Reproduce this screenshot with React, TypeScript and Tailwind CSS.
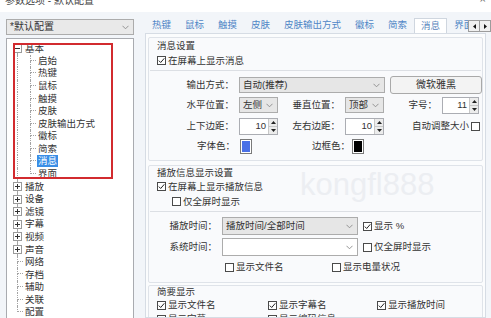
import React from 'react';

const FONT = "font-['Liberation_Sans','Noto_Sans_CJK_SC',sans-serif]";

type Node = { t: string; kind: 'open' | 'plus' | 'leaf' | 'child'; last?: boolean; first?: boolean; sel?: boolean };

const tree: Node[] = [
  { t: '基本', kind: 'open', first: true },
  { t: '启始', kind: 'child' },
  { t: '热键', kind: 'child' },
  { t: '鼠标', kind: 'child' },
  { t: '触摸', kind: 'child' },
  { t: '皮肤', kind: 'child' },
  { t: '皮肤输出方式', kind: 'child' },
  { t: '徽标', kind: 'child' },
  { t: '简索', kind: 'child' },
  { t: '消息', kind: 'child', sel: true },
  { t: '界面', kind: 'child', last: true },
  { t: '播放', kind: 'plus' },
  { t: '设备', kind: 'plus' },
  { t: '滤镜', kind: 'plus' },
  { t: '字幕', kind: 'plus' },
  { t: '视频', kind: 'plus' },
  { t: '声音', kind: 'plus' },
  { t: '网络', kind: 'leaf' },
  { t: '存档', kind: 'leaf' },
  { t: '辅助', kind: 'leaf' },
  { t: '关联', kind: 'leaf' },
  { t: '配置', kind: 'leaf', last: true },
];

const line = 'border-l border-dotted border-[#a3a3a3]';

function TreeRow({ n }: { n: Node }) {
  if (n.kind === 'open' || n.kind === 'plus') {
    return (
      <div className="flex h-[12.57px] items-stretch">
        <div className="w-[6px]" />
        <div className="flex w-[9px] flex-col items-center">
          <div className={`w-0 flex-1 ${n.first ? '' : line}`} />
          <div className="flex h-[9px] w-[9px] items-center justify-center border border-[#9a9a9a] bg-white">
            <svg width="7" height="7" viewBox="0 0 7 7">
              <path d="M1 3.5H6" stroke="#333" strokeWidth="1" />
              {n.kind === 'plus' && <path d="M3.5 1V6" stroke="#333" strokeWidth="1" />}
            </svg>
          </div>
          <div className={`w-0 flex-1 ${line}`} />
        </div>
        <span className="ml-[3px] self-center leading-none">{n.t}</span>
      </div>
    );
  }
  if (n.kind === 'leaf') {
    return (
      <div className="flex h-[12.57px] items-stretch">
        <div className="w-[10px]" />
        <div className="flex w-[6px] flex-col">
          <div className={`h-1/2 border-b border-dotted border-[#a3a3a3] ${line}`} />
          <div className={`h-1/2 ${n.last ? '' : line}`} />
        </div>
        <span className="ml-[2px] self-center leading-none">{n.t}</span>
      </div>
    );
  }
  return (
    <div className="flex h-[12.57px] items-stretch">
      <div className="w-[10px]" />
      <div className={`w-[13px] ${line}`} />
      <div className="flex w-[6px] flex-col">
        <div className={`h-1/2 border-b border-dotted border-[#a3a3a3] ${line}`} />
        <div className={`h-1/2 ${n.last ? '' : line}`} />
      </div>
      <span
        className={`ml-[1px] self-center px-[1px] leading-[12px] ${n.sel ? 'bg-[#3a8ee6] text-white' : ''}`}
      >
        {n.t}
      </span>
    </div>
  );
}

function Chevron() {
  return (
    <svg width="7" height="5" viewBox="0 0 7 5" className="shrink-0">
      <path d="M0.5 0.8L3.5 3.8L6.5 0.8" stroke="#8a8a8a" fill="none" strokeWidth="0.9" />
    </svg>
  );
}

function Select({ text, w, white, h = 'h-[16px]' }: { text: string; w: string; white?: boolean; h?: string }) {
  return (
    <div
      className={`flex ${w} ${h} shrink-0 items-center border border-[#acacac] pl-[3px] pr-[4px] ${
        white ? 'bg-white' : 'bg-[#e6e6e6]'
      }`}
    >
      <span className="flex-1 truncate leading-none">{text}</span>
      <Chevron />
    </div>
  );
}

function Spin({ v, w }: { v: string; w: string }) {
  return (
    <div className={`flex ${w} h-[17px] shrink-0 border border-[#abadb3] bg-white`}>
      <span className="flex-1 self-center pr-[2px] text-right leading-none">{v}</span>
      <div className="flex w-[9px] flex-col border-l border-[#c8c8c8] bg-[#ececec]">
        <div className="flex flex-1 items-center justify-center border-b border-[#c8c8c8]">
          <svg width="5" height="3" viewBox="0 0 5 3">
            <path d="M0 3L2.5 0L5 3Z" fill="#222" />
          </svg>
        </div>
        <div className="flex flex-1 items-center justify-center">
          <svg width="5" height="3" viewBox="0 0 5 3">
            <path d="M0 0L2.5 3L5 0Z" fill="#222" />
          </svg>
        </div>
      </div>
    </div>
  );
}

function Check({ on }: { on?: boolean }) {
  return (
    <span className="flex h-[9px] w-[9px] shrink-0 items-center justify-center border border-[#4a4a4a] bg-white">
      {on && (
        <svg width="7" height="7" viewBox="0 0 7 7">
          <path d="M0.8 3.6L2.7 5.5L6.3 1.3" stroke="#222" fill="none" strokeWidth="1" />
        </svg>
      )}
    </span>
  );
}

function CheckLabel({ on, text }: { on?: boolean; text: string }) {
  return (
    <div className="flex items-center gap-[2px]">
      <Check on={on} />
      <span className="leading-none">{text}</span>
    </div>
  );
}

function Swatch({ color }: { color: string }) {
  return (
    <div className="h-[15px] w-[12px] shrink-0 border border-[#7a7a7a] bg-white p-[1px]">
      <div className={`h-full w-full ${color}`} />
    </div>
  );
}

const tabs = ['热键', '鼠标', '触摸', '皮肤', '皮肤输出方式', '徽标', '简索', '消息', '界面'];

export default function App() {
  return (
    <div className={`relative h-[318px] w-[491px] overflow-hidden bg-white text-[9.5px] text-[#333] ${FONT}`}>
      {/* title bar */}
      <div className="flex h-[12px] items-start justify-between px-[5px]">
        <span className="mt-[-5px] text-[10px] leading-[12px] text-[#444]">参数选项 - 默认配置</span>
        <span className="mt-[-7px] text-[11px] leading-[12px] text-[#666]">×</span>
      </div>

      <div className="flex h-[306px] bg-[#f2f5f9]">
        {/* left column */}
        <div className="w-[139px] shrink-0 pl-[6px] pt-[7px]">
          <div className="flex h-[16px] w-[128px] items-center border border-[#acacac] bg-[#e9e9e9] pl-[3px] pr-[4px]">
            <span className="flex-1 text-[10px] leading-none">*默认配置</span>
            <Chevron />
          </div>
          <div className="mt-[3px] h-[290px] w-[128px] border border-[#a9abb0] bg-white pt-[3px]">
            {tree.map((n) => (
              <TreeRow key={n.t} n={n} />
            ))}
          </div>
        </div>

        {/* right column */}
        <div className="flex min-h-0 w-[352px] flex-col pl-[6px]">
          <div className="flex h-[21px] shrink-0 items-end">
            <div className="flex h-[15px] flex-1 items-end overflow-hidden whitespace-nowrap">
              {tabs.map((t) =>
                t === '消息' ? (
                  <div
                    key={t}
                    className="flex h-[15px] shrink-0 items-center border border-b-0 border-[#cfd6df] bg-white px-[6px] text-[9.5px] text-[#5a86bd]"
                  >
                    {t}
                  </div>
                ) : (
                  <div key={t} className="flex h-[15px] shrink-0 items-center px-[7px] text-[9.5px] text-[#4f86c6]">
                    {t}
                  </div>
                ),
              )}
            </div>
            <div className="mb-[1px] flex h-[12px] w-[23px] shrink-0">
              <div className="flex flex-1 items-center justify-center border border-[#9c9c9c] bg-[#f0f0f0]">
                <svg width="3" height="5" viewBox="0 0 3 5">
                  <path d="M3 0L0 2.5L3 5Z" fill="#111" />
                </svg>
              </div>
              <div className="flex flex-1 items-center justify-center border border-l-0 border-[#9c9c9c] bg-[#f0f0f0]">
                <svg width="3" height="5" viewBox="0 0 3 5">
                  <path d="M0 0L3 2.5L0 5Z" fill="#111" />
                </svg>
              </div>
            </div>
          </div>

          <div className="mr-[5px] min-h-0 flex-1 overflow-hidden border border-[#d6dce4] bg-[#fbfcfd] px-[2px] pt-[3px]">
            {/* 消息设置 */}
            <div className="h-[124px] rounded-[2px] border border-[#dfe3e9] bg-[#f9fafc]">
              <div className="flex h-[16px] items-center pl-[8px] leading-none">消息设置</div>
              <div className="flex h-[13px] items-center pl-[8px]">
                <CheckLabel on text="在屏幕上显示消息" />
              </div>
              <div className="mx-[1px] mt-[3px] border-t border-[#dcdfe4]" />
              <div className="pt-[6px]">
                <div className="flex h-[16px] items-center">
                  <span className="w-[90px] pr-[5px] text-right leading-none">输出方式：</span>
                  <Select text="自动(推荐)" w="w-[146px]" />
                  <div className="ml-[5px] flex h-[18px] w-[92px] items-center justify-center rounded-[3px] border border-[#a9a9a9] bg-[#f3f3f3] text-[10px] leading-none">
                    微软雅黑
                  </div>
                </div>
                <div className="mt-[4px] flex h-[16px] items-center">
                  <span className="w-[90px] pr-[5px] text-right leading-none">水平位置：</span>
                  <Select text="左侧" w="w-[39px]" />
                  <span className="w-[67px] pr-[5px] text-right leading-none">垂直位置：</span>
                  <Select text="顶部" w="w-[39px]" />
                  <span className="w-[58px] pr-[5px] text-right leading-none">字号：</span>
                  <Spin v="11" w="w-[37px]" />
                </div>
                <div className="mt-[5px] flex h-[16px] items-center">
                  <span className="w-[90px] pr-[5px] text-right leading-none">上下边距：</span>
                  <Spin v="10" w="w-[39px]" />
                  <span className="w-[67px] pr-[5px] text-right leading-none">左右边距：</span>
                  <Spin v="10" w="w-[39px]" />
                  <div className="ml-auto mr-[2px] flex items-center gap-[2px]">
                    <span className="leading-none">自动调整大小</span>
                    <Check />
                  </div>
                </div>
                <div className="mt-[4px] flex h-[16px] items-center">
                  <span className="w-[91px] pr-[5px] text-right leading-none">字体色：</span>
                  <Swatch color="bg-[#4a70e6]" />
                  <span className="w-[100px] pr-[2px] text-right leading-none">边框色：</span>
                  <Swatch color="bg-black" />
                </div>
              </div>
            </div>

            {/* 播放信息显示设置 */}
            <div className="mt-[4px] h-[118px] rounded-[2px] border border-[#dfe3e9] bg-[#f9fafc]">
              <div className="flex h-[13px] items-center pl-[8px] leading-none">播放信息显示设置</div>
              <div className="flex h-[15px] items-center pl-[8px]">
                <CheckLabel on text="在屏幕上显示播放信息" />
              </div>
              <div className="flex h-[15px] items-center pl-[23px]">
                <CheckLabel text="仅全屏时显示" />
              </div>
              <div className="mx-[1px] mt-[2px] border-t border-[#dcdfe4]" />
              <div className="pt-[5px]">
                <div className="flex h-[18px] items-center">
                  <span className="w-[73px] pr-[5px] text-right leading-none">播放时间：</span>
                  <Select text="播放时间/全部时间" w="w-[136px]" h="h-[18px]" />
                  <div className="ml-[5px]">
                    <CheckLabel on text="显示 %" />
                  </div>
                </div>
                <div className="mt-[3px] flex h-[18px] items-center">
                  <span className="w-[73px] pr-[5px] text-right leading-none">系统时间：</span>
                  <Select text="" w="w-[136px]" h="h-[18px]" white />
                  <div className="ml-[5px]">
                    <CheckLabel text="仅全屏时显示" />
                  </div>
                </div>
                <div className="mt-[4px] flex h-[14px] items-center pl-[76px]">
                  <div className="w-[107px]">
                    <CheckLabel text="显示文件名" />
                  </div>
                  <CheckLabel text="显示电量状况" />
                </div>
              </div>
            </div>

            {/* 简要显示 */}
            <div className="mt-[2px] h-[60px] rounded-[2px] border border-[#dfe3e9] bg-[#f9fafc]">
              <div className="flex h-[12px] items-center pl-[8px] leading-none">简要显示</div>
              <div className="flex h-[14px] items-center pl-[8px]">
                <div className="w-[111px]">
                  <CheckLabel on text="显示文件名" />
                </div>
                <div className="w-[109px]">
                  <CheckLabel on text="显示字幕名" />
                </div>
                <CheckLabel on text="显示播放时间" />
              </div>
              <div className="flex h-[14px] items-center pl-[8px]">
                <div className="w-[111px]">
                  <CheckLabel on text="显示字幕" />
                </div>
                <div className="w-[109px]">
                  <CheckLabel on text="显示编码信息" />
                </div>
              </div>
            </div>
          </div>
        </div>
      </div>

      {/* watermark */}
      <div className="pointer-events-none absolute left-[300px] top-[169px] font-['Liberation_Sans',sans-serif] text-[31px] leading-none text-[#eceef2]">
        kongfl888
      </div>

      {/* red annotation box */}
      <div className="pointer-events-none absolute left-[13px] top-[43px] h-[136px] w-[100px] border-2 border-[#d22b2f]" />
    </div>
  );
}
